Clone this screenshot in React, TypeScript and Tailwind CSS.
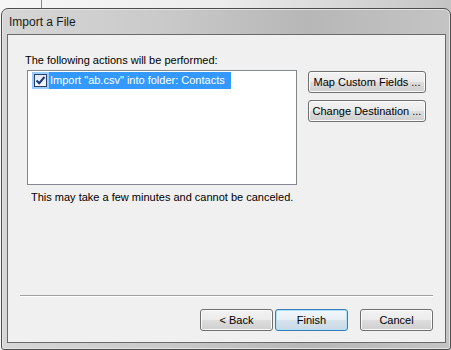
import React from 'react';

const font = { fontFamily: '"Liberation Sans", Arial, sans-serif' };

function WinButton({ label, width, primary }: { label: string; width: string; primary?: boolean }) {
  return (
    <div
      className={`${width} h-[22px] rounded-[3px] border flex items-center justify-center text-[11px] text-black ${
        primary
          ? 'border-[#3c7fb1] shadow-[inset_0_0_0_1px_#aee0fb] bg-[linear-gradient(to_bottom,#f1f7fb_0%,#e6eff5_50%,#d7e3ec_51%,#c9d9e5_100%)]'
          : 'border-[#707070] shadow-[inset_0_0_0_1px_#fbfbfb] bg-[linear-gradient(to_bottom,#f2f2f2_0%,#ebebeb_50%,#dddddd_51%,#cfcfcf_100%)]'
      }`}
    >
      {label}
    </div>
  );
}

export default function App() {
  return (
    <div
      className="w-[451px] h-[350px] overflow-hidden relative bg-[linear-gradient(to_right,#f6f6f6_0%,#ececec_50%,#c4c4c4_100%)] pt-[8px] pl-[1px]"
      style={font}
    >
      {/* desktop edge behind the dialog */}
      <div className="absolute left-[41px] top-0 w-px h-[8px] bg-[#8a8a8a]" />

      {/* window */}
      <div className="w-[450px] h-[342px] rounded-t-[7px] rounded-b-[3px] border border-[#4d4d4d] bg-[linear-gradient(to_right,#d6d6d6_0%,#cacaca_35%,#b7b7b7_68%,#c4c4c4_100%)] shadow-[inset_0_0_0_1px_#e4e4e4] flex flex-col">
        {/* title bar */}
        <div className="h-[25px] pl-[7px] flex items-center text-[12px] text-[#1a1a1a]">Import a File</div>

        {/* client area */}
        <div className="ml-[5px] w-[439px] h-[309px] border border-[#6a6a6a] bg-[#f0f0f0] flex flex-col">
          <div className="mt-[17px] pl-[17px] h-[16px] leading-[16px] text-[11px] text-black">
            The following actions will be performed:
          </div>

          <div className="mt-[2px] pl-[19px] flex">
            {/* list box */}
            <div className="w-[270px] h-[115px] border border-[#828790] bg-white pt-[1px] pl-[4px]">
              <div className="flex h-[17px]">
                <div className="w-[17px] h-[17px] bg-[#99ccff] flex items-center justify-center">
                  <div className="w-[13px] h-[13px] border border-[#2a3f63] bg-[linear-gradient(to_bottom,#dfe9f5,#f6f9fd)] flex items-center justify-center">
                    <svg width="11" height="11" viewBox="0 0 11 11">
                      <path d="M1.5 5.5 L4.2 8.2 L9.5 2" fill="none" stroke="#1c3b7a" strokeWidth="2" />
                    </svg>
                  </div>
                </div>
                <div className="bg-[#3399ff] text-white text-[11px] leading-[17px] pl-[1px] pr-[6px]">
                  Import "ab.csv" into folder: Contacts
                </div>
              </div>
            </div>

            {/* side buttons */}
            <div className="ml-[11px] mt-[1px] flex flex-col gap-[7px]">
              <WinButton label="Map Custom Fields ..." width="w-[118px]" />
              <WinButton label="Change Destination ..." width="w-[118px]" />
            </div>
          </div>

          <div className="mt-[4px] pl-[23px] h-[16px] leading-[16px] text-[11px] text-black">
            This may take a few minutes and cannot be canceled.
          </div>

          <div className="mt-[90px] ml-[12px] w-[413px] h-px bg-[#a0a0a0]" />
          <div className="ml-[12px] w-[413px] h-px bg-white" />

          <div className="mt-[12px] pl-[192px] flex">
            <WinButton label="< Back" width="w-[73px]" />
            <div className="ml-[2px]">
              <WinButton label="Finish" width="w-[73px]" primary />
            </div>
            <div className="ml-[12px]">
              <WinButton label="Cancel" width="w-[73px]" />
            </div>
          </div>
        </div>
      </div>
    </div>
  );
}
